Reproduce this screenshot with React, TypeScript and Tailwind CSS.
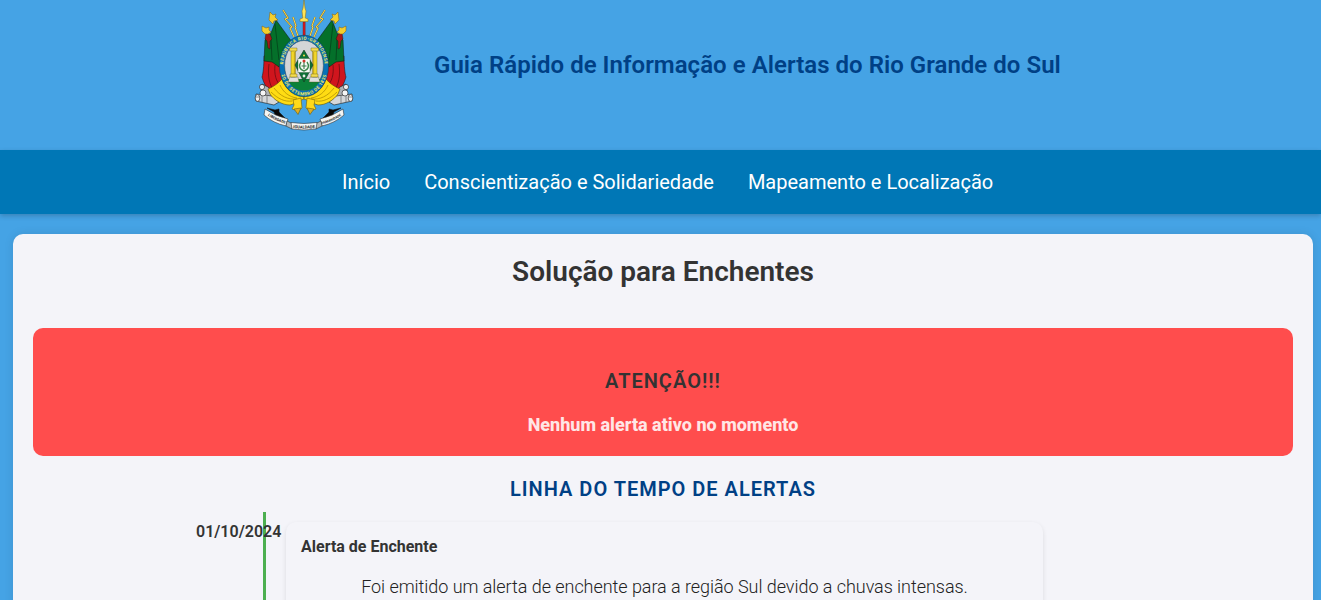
function Flags() {
  return (
    <g stroke="#111" strokeWidth="0.5" strokeLinejoin="round">
      <path d="M20 56 C20 66 19 74 18 77 C20 84 23 89 25 91 L48 90 L42 50 Z" fill="#d0151d" />
      <path d="M32 20 L48 42 L37 60 L35 67 L28 62 L20 61 L21 40 L27 33 Z" fill="#04702a" />
      <path d="M25 64 C24 72 24 80 28 88 M31 65 C30 74 32 82 37 86" fill="none" stroke="#6d0c12" strokeWidth="0.8" />
      <path d="M31 24 L35 60 M27 38 L28 60" fill="none" stroke="#05401a" strokeWidth="0.8" />
      <path d="M22 33 L26 34 L28 39 L26 41 L26 49 L24 48 L23 41 L21 39 Z" fill="#a51a1a" strokeWidth="0.4" />
      <path d="M26 12 L29 15 L32 14 L31 17 L34 20 L30 21 L29 24 L25 20 Z" fill="#f4cf2c" stroke="#7c5b12" strokeWidth="0.5" />
      <path d="M18 26 L22 28 L25 27 L25 30 L27 32 L24 34 L21 34 L18 31 Z" fill="#f4cf2c" stroke="#7c5b12" strokeWidth="0.5" />
      <path d="M39 10 L44 18 L41 19 L48 27 L46 28 L50 37" fill="none" stroke="#8b7028" strokeWidth="1.7" />
      <path d="M39 10 L44 18 L41 19 L48 27 L46 28 L50 37" fill="none" stroke="#f7d951" strokeWidth="1" />
      <path d="M49 17 L52 26 L51 27 L54 36" fill="none" stroke="#8b7028" strokeWidth="1.7" />
      <path d="M49 17 L52 26 L51 27 L54 36" fill="none" stroke="#f7d951" strokeWidth="1" />
    </g>
  );
}

function Cannon() {
  return (
    <g stroke="#161616" strokeWidth="0.6" strokeLinejoin="round">
      <path d="M18 84 L24 87 L33 96 L34 101 L26 103 L17 91 Z" fill="#aeb2b6" />
      <path d="M12 94 L28 96 L35 102 L30 105 L12 101 Z" fill="#d5d7d9" />
      <circle cx="18" cy="87" r="2.6" fill="#eceded" />
      <circle cx="19" cy="93" r="3" fill="#f6f6f6" />
      <ellipse cx="13.5" cy="98" rx="2.3" ry="3.4" fill="#f1f1f1" />
      <path d="M18 96 V102 M23 96 V103 M12 97 H15" fill="none" stroke="#4a4d50" />
      <path d="M23 108 L31 110 L35 109 L35 112 L41 118 L35 117 L31 115 L30 112 Z" fill="#080808" />
      <path d="M24 89 C29 87 35 83 38 79 C42 90 50 95 60 96 L60 99 C56 100 51 104 46 105 C38 105 30 100 26 94 Z" fill="#ffdc13" stroke="#60530a" />
      <path d="M30 88 C36 96 44 100 53 99 M27 92 C34 99 41 102 48 101 M36 85 C39 92 45 97 53 98" fill="none" stroke="#a98600" strokeWidth="0.7" />
      <path d="M49 100 L57 98 L58 108 L54 111 L48 109 L50 105 Z" fill="#ffd91a" stroke="#70600c" />
      <path d="M50 109 L57 108 L54 114.5 Z" fill="#e0ae20" stroke="#70600c" />
    </g>
  );
}

function Column() {
  return (
    <g stroke="#5d5516" strokeWidth="0.4">
      <path d="M45.5 77 L54 77 L55 82 L44 82 Z" fill="#dfe0e0" />
      <path d="M47 50 H51.5 V77 H47 Z" fill="#f3d72a" />
      <path d="M45.5 48 H53 V51 H45.5 Z M46 74 H53 V77 H46 Z" fill="#f5dc4f" />
      <path d="M50.4 52 V74" stroke="#b19212" strokeWidth="0.7" />
    </g>
  );
}

function CoatOfArms({ className }: { className: string }) {
  return (
    <svg viewBox="0 0 120 135" className={className} role="img" aria-label="Brasão do Rio Grande do Sul">
      <defs>
        <path id="motto-top" d="M39.7 72 A20.8 26.5 0 1 1 80.3 72" />
        <path id="motto-bottom" d="M36.9 72 A23.6 29.5 0 0 0 83.1 72" />
        <path id="ribbon-left" d="M22.5 114.5 Q31 121 43 124" />
        <path id="ribbon-middle" d="M48 127.8 Q60 129.4 72 127.8" />
        <path id="ribbon-right" d="M77 124.5 Q89 121.5 98 115" />
      </defs>
      <Flags />
      <g transform="translate(120 0) scale(-1 1)">
        <Flags />
      </g>
      <path d="M59 22 H61.2 V36 H59 Z" fill="#d91b22" stroke="#63201c" strokeWidth="0.4" />
      <path d="M60 0 L61 8 L62 11 L61.2 18 L64 19 V21.5 H56 V19 L58.8 18 L58 11 L59 8 Z" fill="#ffe456" stroke="#8d6b12" strokeWidth="0.5" />
      <Cannon />
      <g transform="translate(120 0) scale(-1 1)">
        <Cannon />
      </g>
      <ellipse cx="60" cy="66" rx="24.6" ry="30.8" fill="#0871b5" stroke="#12384b" strokeWidth="0.5" />
      <ellipse cx="60" cy="65.5" rx="19.4" ry="25" fill="#d3d5d7" stroke="#28404b" strokeWidth="0.5" />
      <path d="M43.5 79 H76.5 C74 86 68 90.5 60 90.5 C52 90.5 46 86 43.5 79 Z" fill="#0b8139" />
      <Column />
      <g transform="translate(120 0) scale(-1 1)">
        <Column />
      </g>
      <path d="M60 50 L69 65 L60 82 L51 65 Z" fill="#0d7135" stroke="#16351e" strokeWidth="0.6" />
      <path d="M54 58.5 H66 V72.5 H54 Z" fill="#f8faf5" stroke="#295632" strokeWidth="0.4" />
      <path d="M57 62 C54 66 56 70 60 71 C64 70 66 66 63 62" fill="none" stroke="#3b874b" strokeWidth="1.4" />
      <path d="M60 62 V69 M57.5 66 H62.5" stroke="#367544" strokeWidth="1.1" />
      <circle cx="60" cy="61" r="1.5" fill="#cf3429" />
      <circle cx="60" cy="55.5" r="1" fill="#ffe04b" />
      <circle cx="60" cy="76" r="1.4" fill="#e6efe6" />
      <g fill="#f0e860" fontFamily="Roboto, sans-serif" fontWeight="700" textAnchor="middle">
        <text fontSize="4.5" letterSpacing="0.45"><textPath href="#motto-top" startOffset="50%">REPÚBLICA RIO-GRANDENSE</textPath></text>
        <text fontSize="4.5" letterSpacing="0.5"><textPath href="#motto-bottom" startOffset="50%">20 DE SETEMBRO DE 1835</textPath></text>
      </g>
      <g fill="#f5f5f2" stroke="#333" strokeWidth="0.6">
        <path d="M21 109 Q31 116 44 119 L42 126 Q29 123 20 115 Z" />
        <path d="M99 109 Q89 116 76 119 L78 126 Q91 123 100 115 Z" />
        <path d="M43 121 L49 124 L48 129 L42 126 Z M77 121 L71 124 L72 129 L78 126 Z" fill="#b6b9ba" />
        <path d="M47 122.5 Q60 124.5 73 122.5 L72 129 Q60 131 48 129 Z" />
      </g>
      <g fill="#222" fontFamily="Roboto, sans-serif" fontWeight="700" fontSize="3.7" textAnchor="middle">
        <text><textPath href="#ribbon-left" startOffset="50%">LIBERDADE</textPath></text>
        <text fontSize="4.1"><textPath href="#ribbon-middle" startOffset="50%">IGUALDADE</textPath></text>
        <text fontSize="3.3"><textPath href="#ribbon-right" startOffset="50%">HUMANIDADE</textPath></text>
      </g>
    </svg>
  );
}

const links = ["Início", "Conscientização e Solidariedade", "Mapeamento e Localização"];

export default function App() {
  return (
    <div className="h-[600px] overflow-hidden bg-[#45a3e5] font-[Roboto,sans-serif] text-[#333]">
      <header className="flex h-[150px] items-start pl-[244px]">
        <CoatOfArms className="h-[135px] w-[120px] shrink-0" />
        <h1 className="ml-[70px] mt-[47px] whitespace-nowrap text-2xl leading-9 font-semibold tracking-[0.03px] text-[#004085]">
          Guia Rápido de Informação e Alertas do Rio Grande do Sul
        </h1>
      </header>
      <nav className="flex h-16 items-center gap-[34px] bg-[#0077b6] pl-[342px] text-xl whitespace-nowrap text-white shadow-[0_2px_5px_rgba(0,0,0,0.2)]">
        {links.map((link) => <a key={link} href="#">{link}</a>)}
      </nav>
      <main className="mt-5 mr-2 ml-[13px] h-[500px] rounded-[10px] bg-[#f4f4f9] px-5 pt-[18px] text-center shadow-[0_0_10px_rgba(0,0,0,0.1)]">
        <h2 className="text-[28px] leading-10 font-semibold">Solução para Enchentes</h2>
        <section className="mt-9 h-32 rounded-[10px] bg-[#ff4d4d] pt-[38px]">
          <h3 className="text-xl leading-[30px] font-semibold tracking-[1px]">ATENÇÃO!!!</h3>
          <p className="mt-[15px] text-lg leading-7 font-extrabold text-[#ffe6e6]">Nenhum alerta ativo no momento</p>
        </section>
        <h3 className="mt-[18px] text-xl leading-[30px] font-semibold tracking-[1px] text-[#004085]">LINHA DO TEMPO DE ALERTAS</h3>
        <div className="ml-[230px] mt-2 flex h-[200px] border-l-[3px] border-[#4caf50]">
          <time className="-ml-[70px] mt-2 w-[90px] text-left leading-6 font-semibold">01/10/2024</time>
          <article className="mt-[10px] w-[757px] rounded-[10px] bg-[#f4f4f9] px-[15px] pt-[13px] shadow-[0_2px_5px_rgba(0,0,0,0.1)]">
            <h4 className="text-left leading-6 font-bold">Alerta de Enchente</h4>
            <p className="mt-[14px] text-lg leading-7 font-light tracking-[-0.05px] text-[#222]">Foi emitido um alerta de enchente para a região Sul devido a chuvas intensas.</p>
          </article>
        </div>
      </main>
    </div>
  );
}
